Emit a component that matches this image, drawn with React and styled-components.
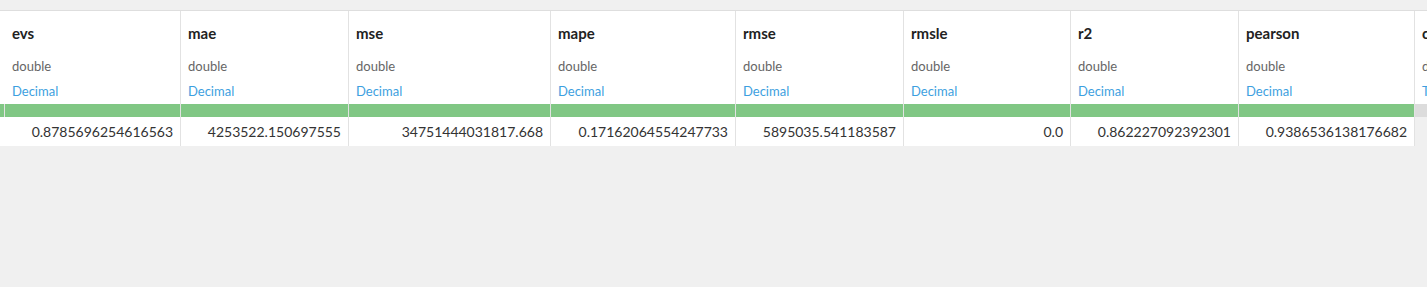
import React from "react";
import styled, { createGlobalStyle } from "styled-components";

const GlobalStyle = createGlobalStyle`
  body {
    margin: 0;
    background: #f0f0f0;
    font-family: Lato, "Liberation Sans", sans-serif;
  }
`;

const Page = styled.div`
  width: 1427px;
  height: 287px;
  padding-top: 10px;
  box-sizing: border-box;
  overflow: hidden;
`;

const Table = styled.div`
  display: flex;
  border-top: 1px solid #dedede;
`;

const Column = styled.div`
  flex: 0 0 ${(p) => p.width}px;
  display: flex;
  flex-direction: column;
  border-right: 1px solid #e2e2e2;
  box-sizing: border-box;
  min-width: 0;
`;

const NameCell = styled.div`
  height: 43px;
  display: flex;
  align-items: center;
  padding: 0 7px;
  background: #fff;
  font-size: 15px;
  font-weight: 700;
  color: #222;
  white-space: nowrap;
`;

const TypeCell = styled.div`
  height: 24px;
  display: flex;
  align-items: center;
  padding: 0 7px;
  background: #fff;
  font-size: 13px;
  color: #666;
  white-space: nowrap;
`;

const MeaningCell = styled.div`
  height: 26px;
  display: flex;
  align-items: center;
  padding: 0 7px;
  background: #fff;
  font-size: 13px;
  color: #3d9fe0;
  white-space: nowrap;
`;

const QualityBar = styled.div`
  height: 13px;
  background: ${(p) => (p.empty ? "#dcdcdc" : "#80c784")};
`;

const ValueCell = styled.div`
  height: 29px;
  display: flex;
  align-items: center;
  justify-content: flex-end;
  padding: 0 7px;
  background: ${(p) => (p.blank ? "transparent" : "#fff")};
  font-size: 14px;
  color: #333;
  white-space: nowrap;
`;

const columns = [
  { name: "evs", width: 176, value: "0.8785696254616563" },
  { name: "mae", width: 168, value: "4253522.150697555" },
  { name: "mse", width: 202, value: "34751444031817.668" },
  { name: "mape", width: 185, value: "0.17162064554247733" },
  { name: "rmse", width: 168, value: "5895035.541183587" },
  { name: "rmsle", width: 167, value: "0.0" },
  { name: "r2", width: 168, value: "0.862227092392301" },
  { name: "pearson", width: 176, value: "0.9386536138176682" },
];

const App = () => {
  return (
    <Page>
      <GlobalStyle />
      <Table>
        <Column width={5}>
          <NameCell />
          <TypeCell />
          <MeaningCell />
          <QualityBar />
          <ValueCell />
        </Column>
        {columns.map((col) => (
          <Column key={col.name} width={col.width}>
            <NameCell>{col.name}</NameCell>
            <TypeCell>double</TypeCell>
            <MeaningCell>Decimal</MeaningCell>
            <QualityBar />
            <ValueCell>{col.value}</ValueCell>
          </Column>
        ))}
        <Column width={120}>
          <NameCell>comment</NameCell>
          <TypeCell>double</TypeCell>
          <MeaningCell>Text</MeaningCell>
          <QualityBar empty />
          <ValueCell blank />
        </Column>
      </Table>
    </Page>
  );
};

export default App;
